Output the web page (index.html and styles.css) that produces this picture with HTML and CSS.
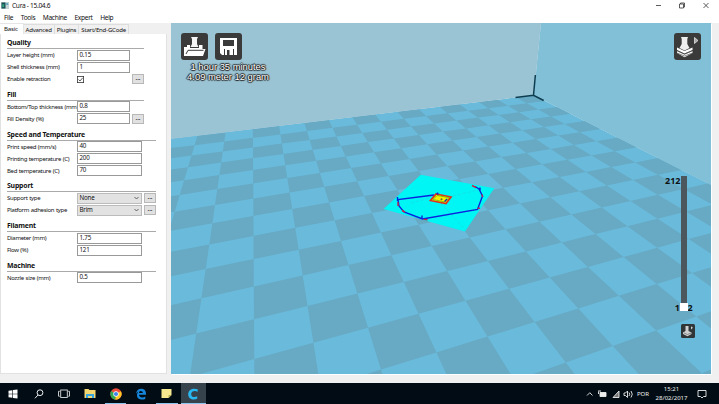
FILE: index.html
```
<!DOCTYPE html>
<html lang="en">
<head>
<meta charset="utf-8">
<title>Cura - 15.04.6</title>
<link rel="stylesheet" href="styles.css">
</head>
<body>
<div class="screen">
  <header class="titlebar">
    <svg class="app-icon" width="8" height="7" viewBox="0 0 8 7"><rect width="8" height="7" fill="#c5d3d5"/><rect x=".5" y=".5" width="4" height="6" fill="#174d55"/><rect x="1.2" y="2.2" width="2" height="3" fill="#35a17d"/><rect x="5.2" y="1" width="2" height="2" fill="#67a6bf"/></svg>
    <span class="title">Cura - 15.04.6</span>
    <svg class="win-controls" width="56" height="10" viewBox="0 0 56 10" fill="none" stroke="#333" stroke-width=".8"><path d="M0 4.500H5M23.500 3H27.500V7H23.500ZM24.500 3V2H28.500V6H27.500M47.500 2L52.500 7M52.500 2L47.500 7"/></svg>
  </header>
  <nav class="menubar"><span>File</span><span>Tools</span><span>Machine</span><span>Expert</span><span>Help</span></nav>
  <main class="workspace">
    <aside class="sidebar">
      <div class="tabs"><span class="tab active">Basic</span><span class="tab">Advanced</span><span class="tab">Plugins</span><span class="tab">Start/End-GCode</span></div>
      <form class="panel">
        <section class="narrow">
          <h2>Quality</h2>
          <div class="row"><label>Layer height (mm)</label><span class="field">0.15</span></div>
          <div class="row"><label>Shell thickness (mm)</label><span class="field">1</span></div>
          <div class="row"><label>Enable retraction</label><span class="check"><svg width="7" height="7" viewBox="0 0 7 7" fill="none" stroke="#333"><rect x=".4" y=".4" width="6.200" height="6.200" stroke-width=".8"/><path d="M1.500 3.500L3 5L5.700 1.800" stroke-width=".8"/></svg></span><span class="more">...</span></div>
        </section>
        <section class="narrow">
          <h2>Fill</h2>
          <div class="row"><label>Bottom/Top thickness (mm)</label><span class="field">0.8</span></div>
          <div class="row"><label>Fill Density (%)</label><span class="field">25</span><span class="more">...</span></div>
        </section>
        <section>
          <h2>Speed and Temperature</h2>
          <div class="row"><label>Print speed (mm/s)</label><span class="field">40</span></div>
          <div class="row"><label>Printing temperature (C)</label><span class="field">200</span></div>
          <div class="row"><label>Bed temperature (C)</label><span class="field">70</span></div>
        </section>
        <section>
          <h2>Support</h2>
          <div class="row"><label>Support type</label><span class="field select">None<svg width="5" height="4" viewBox="0 0 5 4"><path d="M.5 1L2.500 3L4.500 1" fill="none" stroke="#444" stroke-width=".8"/></svg></span><span class="more">...</span></div>
          <div class="row"><label>Platform adhesion type</label><span class="field select">Brim<svg width="5" height="4" viewBox="0 0 5 4"><path d="M.5 1L2.500 3L4.500 1" fill="none" stroke="#444" stroke-width=".8"/></svg></span><span class="more">...</span></div>
        </section>
        <section>
          <h2>Filament</h2>
          <div class="row"><label>Diameter (mm)</label><span class="field">1.75</span></div>
          <div class="row"><label>Flow (%)</label><span class="field">121</span></div>
        </section>
        <section>
          <h2>Machine</h2>
          <div class="row"><label>Nozzle size (mm)</label><span class="field">0.5</span></div>
        </section>
      </form>
    </aside>
    <div class="viewport">
      <svg class="scene" width="540" height="351" viewBox="171 23 540 351">
        <path d="M170 138.700L533.700 95.300L711 184.700V375H170Z" fill="#69badb"/>
        <path id="tiles" fill="#68a9c3"/>
        <path d="M170 23H541L533.700 95.300L170 139Z" fill="#9ac3d3"/>
        <path d="M541 23H711V185L533.700 95.300Z" fill="#81c0d7"/>
        <path d="M535.400 75L533.500 95.300M515.500 97.400L533.500 95.300L543.700 100.500" fill="none" stroke="#0d3d50" stroke-width="1.500"/>
        <path d="M420.700 174.700L494.300 188.300L465 231.500L383.500 209Z" fill="#00f5f5"/>
        <path d="M411 203L430 198M441 203L465 230M453 196L482 189" stroke="#27cfd4" stroke-width=".5" stroke-dasharray="3 2" fill="none"/>
        <g fill="none" stroke="#0a22dc" stroke-width="1.400"><path d="M434 195L398 199.500L399 206L404 212L422.500 219L477.500 209.500L482.500 196L479 189L475 186.500M397.500 197V201M422 215.500V219M480 187.500V191M437.500 192.500V196"/></g>
        <path d="M472 185.500L476 187.500M481.800 194.500L482.800 197M477.500 208.200L480 208.200M402 210.500L405 212M423.500 219.400L427.500 219.800M398 202V206" stroke="#c8254a" stroke-width="1.400"/>
        <path d="M436 194L451 197L446 203.500L430.500 200.500Z" fill="#f7ee00" stroke="#dd321c" stroke-width="1.700"/>
        <path d="M437 195.500L449 197.700L445 202L433 199.500Z" fill="none" stroke="#65bd0c" stroke-width=".8"/>
        <path d="M436.500 193.700L438.500 194.100M444.500 201.500L447 198.800" stroke="#1720c4" stroke-width="1.200"/>
        <circle cx="441.500" cy="199.300" r="1" fill="#66602f"/>
      </svg>
      <div class="overlay actions">
        <svg width="27" height="27" viewBox="0 0 27 27"><rect width="27" height="27" rx="3" fill="#3a3a3a"/><path d="M10 4H17L16 6V11L17.500 14H9.500L11 11V6Z" fill="#f5f5f5"/><path d="M3 14H6V12H9V14H18V12H21.500V16H24.500L22 23H3Z" fill="#fff"/><path d="M5 21L7 17.300H22.500" fill="none" stroke="#3a3a3a"/><path d="M9 14.500H18" stroke="#3a3a3a"/></svg>
        <svg width="27" height="27" viewBox="0 0 27 27"><rect width="27" height="27" rx="3" fill="#3a3a3a"/><path d="M5 5H22V22H19V16H9V22H7L5 20Z" fill="#fff"/><path d="M8 7H19V13H8Z" fill="#3a3a3a"/><path d="M10 16H18V22H10Z" fill="#fff"/><path d="M12 17H14.500V22H12Z" fill="#3a3a3a"/></svg>
      </div>
      <div class="overlay estimate"><span>1 hour 35 minutes</span><span>4.09 meter 12 gram</span></div>
      <svg class="overlay view-mode" width="27" height="27" viewBox="0 0 27 27"><rect width="27" height="27" rx="3" fill="#3a3a3a"/><path d="M7 4H14L13.300 6V11L15.500 15L10.500 17.500L5.500 15L7.700 11V6Z" fill="#eee"/><path d="M3 14.500L10.500 18L18.500 14.500V17L10.500 20.500L3 17ZM3 18L10.500 21.500L18.500 18V20L10.500 24.200L3 20Z" fill="#fff"/><path d="M3 17.700L10.500 21.200L18.500 17.700M3 20L10.500 23L18.500 20" fill="none" stroke="#555" stroke-width=".7"/><path d="M20.500 4.500L24 7.500L20.500 10.500Z" fill="#aaa" stroke="#eee" stroke-width=".7"/></svg>
      <div class="overlay slider"><span class="top">212</span><span class="low">1</span><span class="second">2</span><i></i></div>
      <svg class="overlay layer-mode" width="14" height="14" viewBox="0 0 14 14"><rect width="14" height="14" rx="1.500" fill="#303638"/><path d="M4.500 2H7.500V7L10.500 8.500V10L6.500 12.300L2 10V8.500L4.500 7Z" fill="#d0d0d0"/><path d="M3 9L6.500 10.500L10 9" fill="none" stroke="#555" stroke-width=".6"/><path d="M10 2.300L12 3.800L10 5.500Z" fill="#ccc"/></svg>
    </div>
  </main>
  <footer class="taskbar">
    <div class="apps">
      <span class="app"><svg width="10" height="10" viewBox="0 0 10 10" fill="#fff"><path d="M.5 1.800L4.400 1.200V4.700H.5ZM5 1.100L9.500.5V4.700H5ZM.5 5.300H4.400V8.800L.5 8.200ZM5 5.300H9.500V9.500L5 8.900Z"/></svg></span>
      <span class="app"><svg width="10" height="10" viewBox="0 0 10 10" fill="none" stroke="#eee"><circle cx="6" cy="3.700" r="2.900"/><path d="M4 6L1 9.300"/></svg></span>
      <span class="app"><svg width="12" height="10" viewBox="0 0 12 10" fill="none" stroke="#ddd" stroke-width=".9"><rect x="2.700" y="1" width="6.600" height="7.500"/><path d="M1.800 2.300H.5V7.200H1.800M10.200 2.300H11.500V7.200H10.200"/></svg></span>
      <span class="app"><svg width="12" height="11" viewBox="0 0 12 11"><path d="M.5 1H4.500L5.500 2H11.500V10H.5Z" fill="#f6d873"/><path d="M2 6H10V10H8V8H4V10H2Z" fill="#39a6dd"/></svg></span>
      <span class="app running"><svg width="12" height="12" viewBox="0 0 12 12"><circle cx="6" cy="6" r="5.700" fill="#ed4b3b"/><path d="M6 6L1.100 3.100A5.700 5.700 0 0 0 5.500 11.700Z" fill="#31a852"/><path d="M6 6L10.900 3.300A5.700 5.700 0 0 1 5.500 11.700Z" fill="#fbc926"/><circle cx="6" cy="6" r="2.700" fill="#fff"/><circle cx="6" cy="6" r="2.100" fill="#4285e8"/></svg></span>
      <span class="app"><svg width="12" height="12" viewBox="0 0 12 12"><path d="M1 5.800C1.300 2.500 3.500.7 6.300.7C9.500.7 11 3 11 5.500V6.800H4C4.200 10 8.200 10 10.300 8.600V10.900C6.500 12.600 1.800 11.300 2 7C2.100 4.800 3.400 3.700 4.900 3.100C4.300 3.700 4.100 4.400 4 5H7.900C7.900 2.200 3.500 2.100 1 5.800Z" fill="#1586dc"/></svg></span>
      <span class="app running"><svg width="11" height="11" viewBox="0 0 11 11"><path d="M.5 1H10.500V7L7.500 10H.5Z" fill="#f5e88f"/><path d="M7.500 10V7H10.500Z" fill="#b5a956"/></svg></span>
      <span class="app running current"><svg width="12" height="12" viewBox="0 0 12 12"><path d="M10.700 1.300V3.800C8 2.400 4.300 2.900 4.200 6C4.100 9 7.500 9.700 10.200 8.200V10.800C6 12.600 1 11 1.200 6C1.400 1.200 6.500-.3 10.700 1.300Z" fill="#29b7ef"/></svg></span>
    </div>
    <div class="tray">
      <svg width="48" height="12" viewBox="0 0 48 12" fill="none" stroke="#eee" stroke-width=".9"><path d="M1 7.500L3.800 4.700L6.500 7.500"/><path d="M14 4.500H20V8.500H14Z" fill="#eee"/><path d="M12.500 3.500V6M12 3H15"/><path d="M27 9.500L33 3V9.500Z" fill="#777"/><path d="M38 5H39.500L41.500 3V9.500L39.500 7.500H38ZM43 4.500Q44.500 6.200 43 8M45 3Q47.500 6.200 45 9.500"/></svg>
      <span class="lang">POR</span>
      <span class="clock"><span>15:21</span><span>28/02/2017</span></span>
      <svg class="notice" width="10" height="10" viewBox="0 0 10 10" fill="none" stroke="#eee" stroke-width=".9"><path d="M1 1.500H9V7.500H6.500L5 9L3.500 7.500H1Z"/></svg>
    </div>
  </footer>
</div>
<script src="floor.js"></script>
</body>
</html>
```
FILE: styles.css
```
* { box-sizing: border-box; }
body { margin: 0; font-family: "Noto Sans", sans-serif; font-size: 6.3px; color: #111; }
.screen { width: 719px; height: 404px; display: flex; flex-direction: column; background: #f0f0f0; overflow: hidden; }
.screen svg { display: block; flex: none; }
.titlebar { height: 11px; display: flex; align-items: center; background: #fff; padding: 0 7px 0 1px; }
.title { margin-left: 3px; font-size: 6.6px; letter-spacing: -0.3px; white-space: nowrap; }
.win-controls { margin-left: auto; }
.menubar { height: 12px; background: #fff; display: flex; gap: 7.6px; padding: 1px 0 0 4px; font-size: 6.6px; letter-spacing: -0.33px; line-height: 11px; }
.workspace { height: 360px; display: flex; }
.sidebar { width: 171px; padding-right: 4px; }
.tabs { height: 11px; display: flex; align-items: flex-end; }
.tab { height: 10px; line-height: 9px; padding: 0 2px; border: 1px solid #ddd; border-left: 0; border-bottom: 0; font-size: 6.1px; letter-spacing: -0.22px; white-space: nowrap; }
.tab.active { height: 11px; width: 23.500px; padding-left: 4px; background: #fff; border-color: #e5e5e5; }
.panel { height: 340px; margin: 0; background: #fff; border: 1px solid #e2e2e2; border-width: 0 1px 1px; padding: 3px 0 0 6px; }
section { width: 149px; padding-bottom: 3.8px; }
section.narrow { width: 137px; }
h2 { margin: 0; height: 12px; line-height: 11px; font-size: 6.9px; letter-spacing: -0.18px; font-weight: 700; border-bottom: 1px solid #aaa; color: #111; }
.row { height: 12px; display: flex; align-items: center; }
.row label { width: 70px; flex: none; font-size: 6px; letter-spacing: -0.3px; word-spacing: 0.4px; white-space: nowrap; line-height: 12px; }
.field { width: 65px; height: 11px; border: 1px solid #999; padding-left: 1.500px; line-height: 8.500px; font-size: 6.2px; letter-spacing: -0.2px; background: #fff; }
.narrow .field { width: 53px; }
.select { background: #e2e2e2; border-color: #bbb; display: flex; align-items: center; justify-content: space-between; padding-right: 2px; }
.check { width: 53px; }
.more { width: 12px; height: 10px; margin-left: 2px; background: #e1e1e1; border: 1px solid #b8b8b8; text-align: center; line-height: 6px; }
.viewport { position: relative; width: 540px; height: 351px; box-shadow: 1px 1px #fff; }
.overlay { position: absolute; }
.actions { left: 10px; top: 10px; display: flex; gap: 7px; }
.estimate { left: 12px; top: 38.500px; width: 90px; display: flex; flex-direction: column; align-items: center; font: 9.4px/10px "Liberation Sans", sans-serif; color: #fff; white-space: nowrap; text-shadow: 0 0 1px #222, 1px 0 1px #222, -1px 0 1px #222, 0 1px 1px #222, 0 -1px 1px #222; }
.view-mode { left: 503px; top: 10px; }
.slider { left: 510px; top: 153px; width: 6px; height: 134px; background: #4b575d; font: 700 9px/10px "Noto Sans", sans-serif; color: #111; }
.slider span { position: absolute; }
.slider .top { right: 6.5px; top: 0; }
.slider .low { right: 7px; top: 127px; }
.slider .second { left: 6.5px; top: 127px; }
.slider i { position: absolute; left: -1px; top: 127px; width: 8px; height: 8px; background: #fff; }
.layer-mode { left: 510px; top: 301px; }
.taskbar { height: 21px; margin-top: auto; background: #020c14; color: #eee; display: flex; justify-content: space-between; }
.apps { display: flex; }
.app { width: 25.7px; display: flex; align-items: center; justify-content: center; }
.app.running { box-shadow: inset 0 -1px #8cc5ee; width: 21.700px; margin: 0 2px; }
.app.current { background: #36434c; width: 25px; margin: 0 0 0 1px; }
.tray { display: flex; align-items: center; padding-right: 12px; font-size: 6px; }
.lang { margin-left: 3px; }
.clock { margin-left: 7px; width: 31px; display: flex; flex-direction: column; align-items: center; line-height: 9px; white-space: nowrap; }
.notice { margin-left: 10px; }
```
FILE: floor.js
```
// Known build-plate grid corners: column, row, x, y.
const anchors = [
  [0,0,533.7,95.3],[5,0,441.3,106.7],[10,0,329,120.3],[13,0,253,129],[15,0,196.3,136],
  [13,6,253.3,198],[13,9,253.3,259],[13,12,254,359.3],[14,8,210,244],[14,11,196.7,334],
  [10,12,418.3,314],[7,12,549.3,277.3],[4,12,657.3,247.3],[8,14,566,362.7],
  [7,14,612.7,346],[5,14,696,316],[0,4,582.7,121],[0,10,710,184]
];

// Weighted least-squares perspective transform from grid to screen.
function fit(points, weight) {
  const m = Array.from({ length: 8 }, () => new Array(9).fill(0));
  for (const [u, v, x, y] of points) {
    const s = weight(u, v);
    for (const r of [[u,v,1,0,0,0,-u*x,-v*x,x],[0,0,0,u,v,1,-u*y,-v*y,y]]) {
      for (let a = 0; a < 8; a++) for (let b = 0; b < 9; b++) m[a][b] += s * r[a] * r[b];
    }
  }
  for (let c = 0; c < 8; c++) {
    let p = c;
    for (let r = c; r < 8; r++) if (Math.abs(m[r][c]) > Math.abs(m[p][c])) p = r;
    [m[c], m[p]] = [m[p], m[c]];
    for (let r = 0; r < 8; r++) {
      if (r === c) continue;
      const f = m[r][c] / m[c][c];
      for (let k = c; k < 9; k++) m[r][k] -= f * m[c][k];
    }
  }
  return m.map((row, k) => row[8] / row[k]);
}

// Each pass weights the anchors by their depth in the previous one.
let h = fit(anchors, () => 1);
for (let pass = 0; pass < 4; pass++) {
  const g = h;
  h = fit(anchors, (u, v) => 1 / (g[6] * u + g[7] * v + 1) ** 2);
}

function project(u, v) {
  const w = h[6] * u + h[7] * v + 1;
  return w < 0.03 ? null : [(h[0]*u + h[1]*v + h[2]) / w, (h[3]*u + h[4]*v + h[5]) / w];
}

let d = "";
for (let i = 0; i < 24; i++) {
  for (let j = 0; j < 24; j++) {
    if ((i + j) % 2) continue;
    const q = [project(i,j), project(i+1,j), project(i+1,j+1), project(i,j+1)];
    if (q.every(Boolean)) d += "M" + q.map(p => p[0].toFixed(1) + " " + p[1].toFixed(1)).join("L") + "Z";
  }
}
document.getElementById("tiles").setAttribute("d", d);
```
